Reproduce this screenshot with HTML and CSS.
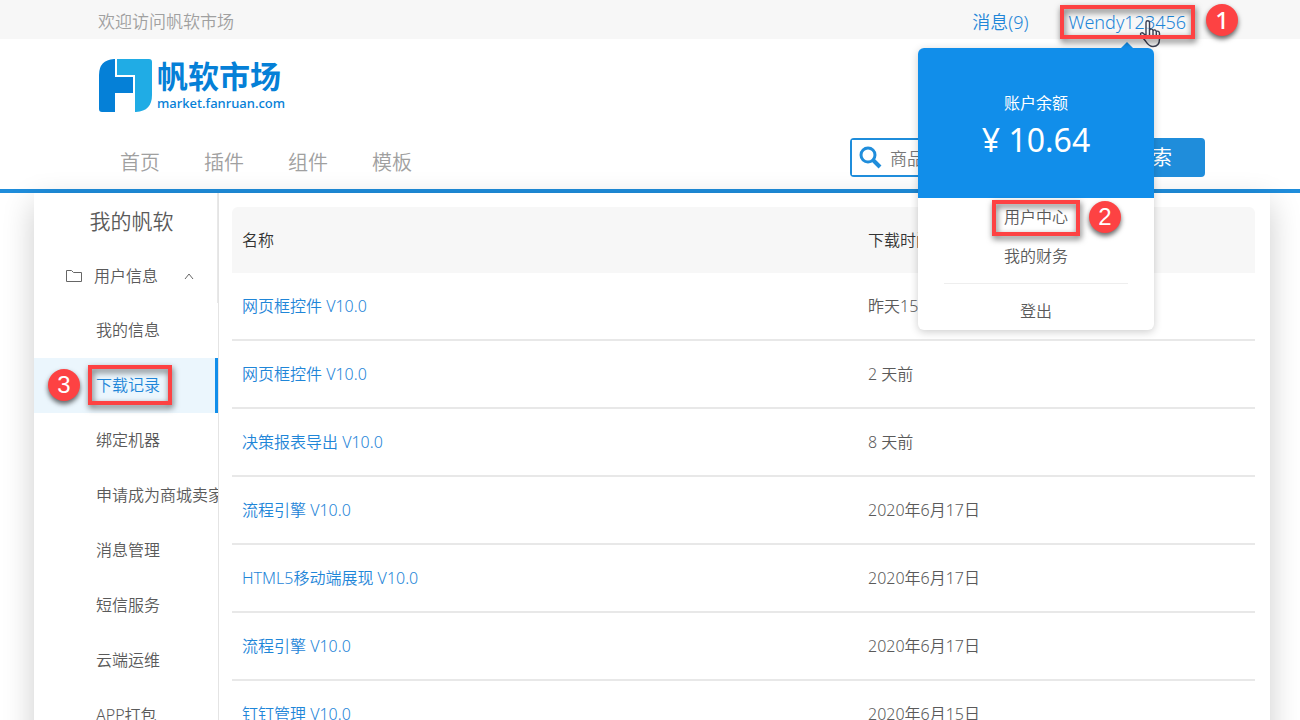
FILE: index.html
```html
<!DOCTYPE html>
<html lang="zh-CN">
<head>
    <meta charset="UTF-8">
    <meta name="viewport" content="width=device-width, initial-scale=1">
    <title>帆软市场</title>
    <link rel="stylesheet" href="styles.css">
</head>
<body>
    <!-- 顶部栏 -->
    <div class="topbar">
        <span class="welcome">欢迎访问帆软市场</span>
        <div class="account">
            <a href="#messages">消息(9)</a>
            <div class="user">
                <a class="marked marked-user" href="#user">Wendy123456</a>
                <span class="step step-user">1</span>
                <!-- 用户菜单 -->
                <div class="popover">
                    <div class="balance">
                        <span class="balance-label">账户余额</span>
                        <span class="balance-value">¥ 10.64</span>
                    </div>
                    <ul class="menu">
                        <li><a class="marked" href="#center">用户中心</a><span class="step step-center">2</span></li>
                        <li><a href="#finance">我的财务</a></li>
                        <li class="logout"><a href="#logout">登出</a></li>
                    </ul>
                </div>
                <svg class="cursor" width="24" height="30" viewBox="0 0 24 30" aria-hidden="true">
                    <path d="M8 17V3.500C8 1.200 11.500 1.200 11.500 3.500V11C12 9.600 14.800 9.800 15 11.500C15.800 10.400 18 10.800 18.300 12.500C19.500 11.700 21.500 12.400 21.500 14.500V20C21.500 25 19 27.500 15 27.500C11 27.500 9.500 25 7.500 22L3 16.500C1.500 14 4 13 5.500 14.500Z" fill="#fff" fill-opacity=".6" stroke="#3b3f52" stroke-width="1.400" stroke-linejoin="round"/>
                    <path d="M11.500 11V16M15 11.500V16M18.300 12.500V16" stroke="#3b3f52" stroke-width="1.400"/>
                </svg>
            </div>
        </div>
    </div>

    <header class="header">
        <a class="logo" href="#home">
            <svg width="54" height="54" viewBox="0 0 54 54" aria-hidden="true">
                <path d="M15 0H16V18H34V34H16V53H3Q0 53 0 50V16Q0 1 15 0Z" fill="#0580d7"/>
                <path d="M18 0H50Q53 0 53 3V36Q53 52 37 53H36V16H18Z" fill="#20ace5"/>
            </svg>
            <span class="logo-text">
                <span class="logo-name">帆软市场</span>
                <span class="logo-domain">market.fanruan.com</span>
            </span>
        </a>
        <div class="header-row">
            <nav class="nav">
                <a href="#home">首页</a>
                <a href="#plugins">插件</a>
                <a href="#widgets">组件</a>
                <a href="#templates">模板</a>
            </nav>
            <form class="search">
                <svg width="24" height="24" viewBox="0 0 24 24" fill="none" stroke="#1f8ddb" aria-hidden="true">
                    <circle cx="9" cy="9" r="7" stroke-width="3"/>
                    <path d="M14 14L21 21" stroke-width="4"/>
                </svg>
                <input type="text" placeholder="商品名称" aria-label="搜索商品">
                <button type="submit">搜索</button>
            </form>
        </div>
    </header>

    <div class="panel">
        <aside class="sidebar">
            <div class="sidebar-top">
                <h2>我的帆软</h2>
                <button class="group" type="button">
                    <svg width="18" height="14" viewBox="0 0 18 14" fill="none" stroke="#666" aria-hidden="true">
                        <path d="M1.500 12.500V1.500H6.500L8.500 3.500H16.500V12.500Z"/>
                    </svg>
                    <span>用户信息</span>
                    <svg class="arrow" width="10" height="8" viewBox="0 0 10 8" fill="none" stroke="#666" aria-hidden="true">
                        <path d="M1 7L5 2L9 7"/>
                    </svg>
                </button>
            </div>
            <ul class="side-list">
                <li><a href="#info">我的信息</a></li>
                <li class="active"><a class="marked" href="#downloads">下载记录</a><span class="step step-downloads">3</span></li>
                <li><a href="#machine">绑定机器</a></li>
                <li><a href="#seller">申请成为商城卖家</a></li>
                <li><a href="#message">消息管理</a></li>
                <li><a href="#sms">短信服务</a></li>
                <li><a href="#cloud">云端运维</a></li>
                <li><a href="#app">APP打包</a></li>
            </ul>
        </aside>

        <main class="content">
            <table class="records">
                <thead>
                    <tr><th class="col-name">名称</th><th>下载时间</th></tr>
                </thead>
                <tbody>
                    <tr><td><a href="#r1">网页框控件 V10.0</a></td><td>昨天15:30</td></tr>
                    <tr><td><a href="#r2">网页框控件 V10.0</a></td><td>2 天前</td></tr>
                    <tr><td><a href="#r3">决策报表导出 V10.0</a></td><td>8 天前</td></tr>
                    <tr><td><a href="#r4">流程引擎 V10.0</a></td><td>2020年6月17日</td></tr>
                    <tr><td><a href="#r5">HTML5移动端展现 V10.0</a></td><td>2020年6月17日</td></tr>
                    <tr><td><a href="#r6">流程引擎 V10.0</a></td><td>2020年6月17日</td></tr>
                    <tr><td><a href="#r7">钉钉管理 V10.0</a></td><td>2020年6月15日</td></tr>
                </tbody>
            </table>
        </main>
    </div>
</body>
</html>
```

FILE: styles.css
```css
* {
    box-sizing: border-box;
}
body {
    margin: 0;
    height: 100vh;
    overflow: hidden;
    background: #fff;
    color: #5a5a5a;
    font-family: "Noto Sans", "Noto Sans CJK SC", sans-serif;
    font-size: 16px;
    font-weight: 350;
    line-height: 24px;
}
a {
    color: #1f86d8;
    text-decoration: none;
}
ul {
    list-style: none;
    margin: 0;
    padding: 0;
}

/* 顶部栏 */
.topbar {
    display: flex;
    justify-content: space-between;
    align-items: center;
    height: 39px;
    padding: 4px 114px 0 98px;
    background: #f7f7f7;
    font-size: 17px;
}
.welcome {
    color: #a0a0a0;
}
.account {
    display: flex;
    gap: 40px;
    font-size: 18px;
}
.user {
    position: relative;
}

/* 红框和编号 */
.marked {
    position: relative;
}
.marked::after {
    content: "";
    position: absolute;
    inset: -6px -12px;
    z-index: 30;
    border: 4px solid #fd4243;
    filter: drop-shadow(1px 3px 3px rgba(0, 0, 0, 0.6));
    pointer-events: none;
}
.marked-user::after {
    inset: -5px -9px;
}
.step {
    position: absolute;
    width: 32px;
    height: 32px;
    border-radius: 50%;
    background: #fd4243;
    box-shadow: 0 3px 5px rgba(0, 0, 0, 0.6);
    color: #fff;
    font-family: "Liberation Sans", sans-serif;
    font-size: 24px;
    font-weight: 400;
    line-height: 32px;
    text-align: center;
}
.step-user {
    left: calc(100% + 20px);
    top: -6px;
    font-family: "Noto Sans", sans-serif;
    font-weight: 500;
}
.step-center {
    left: calc(50% + 53px);
    top: 3px;
}
.step-downloads {
    left: 14px;
    top: 11px;
}
.cursor {
    position: absolute;
    right: 24px;
    top: 9px;
    z-index: 20;
}

/* 用户菜单 */
.popover {
    position: absolute;
    top: 38px;
    right: 32px;
    z-index: 10;
    width: 236px;
    border-radius: 6px;
    background: #fff;
    box-shadow: 0 2px 8px rgba(0, 0, 0, 0.2);
    font-size: 16px;
}
.popover::before {
    content: "";
    position: absolute;
    top: -6px;
    right: 21px;
    border: 6px solid transparent;
    border-top: 0;
    border-bottom-color: #118eea;
}
.balance {
    display: flex;
    flex-direction: column;
    align-items: center;
    height: 150px;
    padding-top: 43px;
    border-radius: 6px 6px 0 0;
    background: #118eea;
    color: #fff;
    font-weight: 400;
}
.balance-value {
    font-size: 32px;
    line-height: 50px;
}
.menu {
    padding: 0 26px;
    text-align: center;
}
.menu li {
    position: relative;
    height: 39px;
    line-height: 39px;
}
.menu a {
    display: inline-block;
    color: #5a5a5a;
}
.menu .marked::after {
    inset: 2px -12px 1px;
}
.menu .logout {
    height: 47px;
    margin-top: 7px;
    padding-top: 8px;
    border-top: 1px solid #eee;
}

.header {
    padding: 20px 95px 12px 98px;
    border-bottom: 4px solid #1f8ddb;
}
.logo {
    display: flex;
    gap: 4px;
    width: max-content;
    color: #0580d7;
}
.logo svg {
    margin-left: 1px;
}
.logo-text {
    display: flex;
    flex-direction: column;
}
.logo-name {
    font-size: 31px;
    font-weight: 700;
    line-height: 34px;
}
.logo-domain {
    font-size: 13px;
    font-weight: 500;
    line-height: 20px;
}
.header-row {
    display: flex;
    justify-content: space-between;
    align-items: center;
    margin-top: 25px;
}
.nav {
    display: flex;
    gap: 44px;
    padding: 10px 22px 0;
    font-size: 20px;
}
.nav a {
    color: #a0a0a0;
}
.search {
    display: flex;
    align-items: center;
    width: 355px;
    height: 39px;
    border: 2px solid #1f8ddb;
    border-radius: 4px;
    background: #1f8ddb;
}
.search svg {
    box-sizing: content-box;
    flex: none;
    height: 24px;
    padding: 6px 7px 5px;
    background: #fff;
}
.search input {
    flex: 1;
    min-width: 0;
    height: 100%;
    padding: 2px 0 0;
    border: 0;
    font: inherit;
    font-size: 17px;
}
.search input::placeholder {
    color: #777;
}
.search button {
    width: 102px;
    border: 0;
    background: #1f8ddb;
    color: #fff;
    font: inherit;
    font-size: 20px;
    font-weight: 400;
}

.panel {
    display: flex;
    min-height: calc(100vh - 193px);
    margin: 0 30px 0 34px;
    box-shadow: 0 10px 30px rgba(0, 0, 0, 0.2);
}
.sidebar {
    flex: none;
    width: 185px;
    overflow: hidden;
    border-right: 1px solid #e4e4e4;
}
.sidebar-top {
    border-right: 1px solid #e8e8e8;
}
.sidebar h2 {
    margin: 0;
    padding: 1px 0 0 12px;
    font-size: 21px;
    font-weight: 350;
    line-height: 54px;
    text-align: center;
}
.group {
    display: flex;
    align-items: center;
    gap: 11px;
    width: 100%;
    height: 55px;
    padding: 0 23px 0 31px;
    border: 0;
    background: none;
    color: #5a5a5a;
    font: inherit;
}
.group .arrow {
    margin-left: auto;
}
.side-list li {
    position: relative;
    height: 55px;
    padding-left: 62px;
    line-height: 55px;
    white-space: nowrap;
}
.side-list a {
    color: #5a5a5a;
}
.side-list .active {
    border-right: 3px solid #118eea;
    background: #ebf6fd;
}
.side-list .active a {
    color: #1f86d8;
}
.side-list .marked::after {
    inset: -9px -12px -9px -8px;
}

.content {
    flex: 1;
    padding: 14px 15px 0 13px;
}
.records {
    width: 100%;
    border-spacing: 0;
    text-align: left;
}
.records th {
    height: 66px;
    padding: 0 10px;
    background: #f7f7f7;
    color: #333;
    font-weight: 350;
}
.records th:first-child {
    border-top-left-radius: 6px;
}
.records th:last-child {
    border-top-right-radius: 6px;
}
.records .col-name {
    width: 626px;
}
.records td {
    height: 68px;
    padding: 0 10px;
    border-bottom: 2px solid #e8e8e8;
}
```
